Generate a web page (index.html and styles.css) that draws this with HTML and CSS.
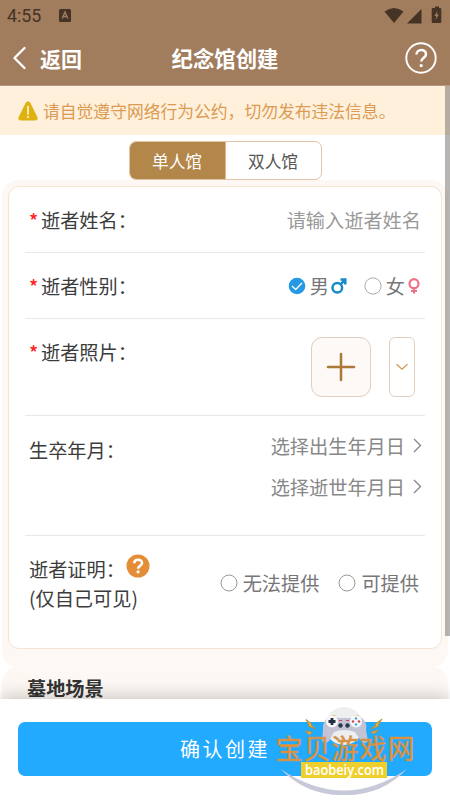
FILE: index.html
```html
<!DOCTYPE html>
<html lang="zh-CN">
<head>
<meta charset="utf-8">
<title>纪念馆创建</title>
<link rel="stylesheet" href="styles.css">
</head>
<body>
<div class="app">
  <header class="header">
    <div class="status">
      <span class="clock">4:55</span>
      <svg class="status-app" width="12" height="14" viewBox="0 0 12 14"><rect width="12" height="13" rx="1.5" fill="#453326"/><path d="M3.2 9.5 6 3l2.8 6.5M4.2 7.5h3.6" fill="none" stroke="#a17e5f" stroke-width="1.4"/></svg>
      <svg class="status-icons" width="58" height="18" viewBox="0 0 58 18"><g fill="#453326"><path d="M.5 5.500Q10 -1.500 19.500 5.500L10 17z"/><path d="M37.500 3v14.500H23z"/><path d="M49 2h2V.5h4V2h1q1.300 0 1.300 1.300v12.400q0 1.300-1.300 1.300h-7q-1.300 0-1.300-1.300V3.300Q47.700 2 49 2z"/></g><path d="M53.600 5 50.300 10h2l-.8 4 3.400-5.500h-2z" fill="#a17e5f"/></svg>
    </div>
    <nav class="navbar">
      <div class="back"><svg width="14" height="24" viewBox="0 0 14 24"><path d="M12.500 2 2.500 12 12.500 22" fill="none" stroke="#fff" stroke-width="2.300" stroke-linecap="round" stroke-linejoin="round"/></svg><span>返回</span></div>
      <h1 class="title">纪念馆创建</h1>
      <svg class="help" width="32" height="32" viewBox="0 0 32 32" fill="none" stroke="#fff"><circle cx="16" cy="16" r="14.700" stroke-width="1.900"/><path d="M11.500 12.500c0-6 9.500-6 9.500-.3 0 3.500-4.700 3.500-4.700 7.300" stroke-width="2.500"/><circle cx="16.200" cy="23.600" r="1" stroke-width="1.400"/></svg>
    </nav>
  </header>
  <main class="content">
    <div class="notice"><svg width="20" height="20" viewBox="0 0 20 20"><path d="M7.700 1.800Q10-1.200 12.300 1.800L19.300 16q1.300 3.400-2.300 3.600H3Q-.6 19.400.7 16z" fill="#dfb10e"/><path d="M10 5.500v7.500" stroke="#fff2d5" stroke-width="1.700" stroke-linecap="round"/><circle cx="10" cy="16" r="1.100" fill="#fff2d5"/></svg><span>请自觉遵守网络行为公约，切勿发布违法信息。</span></div>
    <div class="tabs"><div class="tab active">单人馆</div><div class="tab">双人馆</div></div>
    <section class="panel">
      <div class="card">
        <div class="row">
          <div class="label"><i class="req">*</i>逝者姓名：</div>
          <div class="placeholder">请输入逝者姓名</div>
        </div>
        <div class="row">
          <div class="label"><i class="req">*</i>逝者性别：</div>
          <div class="genders">
            <svg width="18" height="18" viewBox="0 0 18 18"><circle cx="9" cy="9" r="8.300" fill="#2699e3"/><path d="m4 9 3.600 3.500L14 6" fill="none" stroke="#fff" stroke-width="1.300"/></svg>
            <span class="male">男</span>
            <svg width="16" height="16" viewBox="0 0 16 16" fill="none" stroke="#168bc9" stroke-width="2.500"><circle cx="6.300" cy="9.700" r="4.800"/><path d="M9.800 6.200 14 2M9.500 1.600H14.300V6.400"/></svg>
            <svg class="radio-f" width="18" height="18" viewBox="0 0 18 18"><circle cx="9" cy="9" r="8.100" fill="#fff" stroke="#aaa"/></svg>
            <span class="female">女</span>
            <svg width="12" height="16" viewBox="0 0 12 16" fill="none" stroke="#ef7189" stroke-width="2.200"><circle cx="6" cy="5.700" r="4.500"/><path d="M6 10v5.500M3 13h6"/></svg>
          </div>
        </div>
        <div class="row photo">
          <div class="label"><i class="req">*</i>逝者照片：</div>
          <div class="uploads">
            <div class="add"><svg width="30" height="30" viewBox="0 0 30 30"><path d="M15 2v26M2 15h26" stroke="#aa7a36" stroke-width="2.500" stroke-linecap="round"/></svg></div>
            <div class="more"><svg width="14" height="8" viewBox="0 0 14 8"><path d="m1.500 1.200 5.500 5 5.500-5" fill="none" stroke="#cf9b57" stroke-width="1.300"/></svg></div>
          </div>
        </div>
        <div class="row dates">
          <div class="label">生卒年月：</div>
          <div class="pickers">
            <div class="picker">选择出生年月日<svg width="9" height="15" viewBox="0 0 9 15"><path d="m1 1 6.500 6.500L1 14" fill="none" stroke="#888" stroke-width="1.400"/></svg></div>
            <div class="picker">选择逝世年月日<svg width="9" height="15" viewBox="0 0 9 15"><path d="m1 1 6.500 6.500L1 14" fill="none" stroke="#888" stroke-width="1.400"/></svg></div>
          </div>
        </div>
        <div class="row proof">
          <div class="label two-line"><div class="proof-title">逝者证明：<svg width="24" height="24" viewBox="0 0 24 24"><circle cx="12" cy="12" r="11.500" fill="#e58d36"/><path d="M8.200 9.300c0-4.600 7.800-4.600 7.800-.4 0 2.900-3.900 3-3.900 5.800" fill="none" stroke="#fff" stroke-width="2.600"/><circle cx="12.100" cy="17.800" r="1.600" fill="#fff"/></svg></div><div>(仅自己可见)</div></div>
          <div class="options">
            <svg width="18" height="18" viewBox="0 0 18 18"><circle cx="9" cy="9" r="8" fill="#fff" stroke="#999"/></svg><span>无法提供</span>
            <svg class="second" width="18" height="18" viewBox="0 0 18 18"><circle cx="9" cy="9" r="8" fill="#fff" stroke="#999"/></svg><span>可提供</span>
          </div>
        </div>
      </div>
    </section>
    <section class="scene"><h2>墓地场景</h2></section>
    <div class="scrollbar"></div>
  </main>
  <footer class="footer">
    <button class="submit">确认创建</button>
    <svg class="watermark" width="160" height="105" viewBox="0 0 160 105">
      <circle cx="79" cy="31" r="19" fill="#eeeff0"/>
      <path d="M41 24.500 47 29l-1 1 5 4-8-3 1-1zM117 24l-7 5 1 1-5 4 8-3-1-1zM40 36l7 1-2 3zM114 35l-8 2 3 2z" fill="#e5b43a" stroke="#b58b38" stroke-width=".9"/>
      <path d="M65 22.500q1-3 5-2.500v1.500zM88 22.500q1-3 6-2v2z" fill="#efb52f"/>
      <path d="M64 22q5-2 9 1h13q5-3 9-1 8 4 6 13l2 11q-3 4-7 0l-6-9q-11-4-21 0l-5 9q-4 4-7 0l1-11q-1-9 6-13z" fill="#c3c3d4"/>
      <circle cx="67" cy="26.500" r="6" fill="#f8f8fc"/><circle cx="91" cy="26.500" r="6" fill="#f8f8fc"/>
      <path d="M67 23v7M63.500 26.500h7" stroke="#20313f" stroke-width="2.800"/>
      <circle cx="91" cy="23.500" r="1.300" fill="#45acd2"/><circle cx="88" cy="26.500" r="1.300" fill="#d1475c"/><circle cx="94" cy="26.500" r="1.300" fill="#d1475c"/><circle cx="91" cy="29.500" r="1.300" fill="#45acd2"/>
      <path d="M74 25.500h3M81 25.500h3" stroke="#d1475c" stroke-width="1.200"/>
      <circle cx="75.500" cy="30.500" r="2.200" fill="#25394d"/><circle cx="82.500" cy="30.500" r="2.200" fill="#25394d"/>
      <path d="M15.500 74Q79 117 142 74 116 101 79 100 42 101 15.500 74z" fill="#c7c9d9"/>
      <text class="brand" x="10.500" y="63.500" textLength="139">宝贝游戏网</text>
      <rect x="36" y="67" width="86" height="16" fill="#efcf2c"/>
      <text class="domain" x="40" y="79.500" textLength="79" lengthAdjust="spacingAndGlyphs">baobeiy.com</text>
    </svg>
  </footer>
</div>
</body>
</html>
```
FILE: styles.css
```css
* { box-sizing: border-box; }
body { margin: 0; background: #fff; font-family: "Noto Sans CJK SC", sans-serif; }
svg { display: block; flex: none; }
.app { width: 450px; height: 800px; overflow: hidden; display: flex; flex-direction: column; position: relative; }
.header { flex: none; height: 86px; background: #a17c5d; border-bottom: 1px solid #b7967e; }
.status { display: flex; height: 31px; padding: 6px 8px 0 7px; align-items: flex-start; }
.clock { width: 36px; margin-right: 16px; font: 17.8px/20px Roboto, sans-serif; color: #453326; }
.status-app { margin-top: 3px; }
.status-icons { margin-left: auto; }
.navbar { display: grid; grid-template-columns: 1fr auto 1fr; align-items: center; height: 54px; padding: 0 13px 0 12px; color: #fff; }
.back { display: flex; align-items: center; gap: 14px; font-size: 21px; font-weight: 700; line-height: 30px; }
.title { margin: 0; padding-left: 1px; font-size: 21.4px; font-weight: 700; line-height: 30px; }
.help { justify-self: end; }
.content { flex: 1; min-height: 0; overflow: hidden; position: relative; }
.notice { height: 49px; display: flex; align-items: center; gap: 5px; padding-left: 18px; background: #fff0dc; color: #dc9b51; font-size: 16.8px; line-height: 24px; white-space: nowrap; }
.tabs { width: 193px; height: 39px; margin: 6px 0 0 128.5px; display: flex; border: 1px solid #e5c3a6; border-radius: 7px; overflow: hidden; }
.tab { flex: 1; text-align: center; font-size: 16.7px; line-height: 38px; color: #555; }
.tab.active { background: #b38649; color: #fff; border-right: 1px solid #e3b98d; }
.panel { margin: 0 2px; padding: 6px 6px 18px; background: #fdf8f4; border-radius: 16px; }
.card { height: 463px; padding: 0 16px; background: #fff; border: 1.5px solid #f5e4d0; border-radius: 11px; }
.row { height: 66px; display: flex; justify-content: space-between; align-items: center; padding: 0 4px; border-bottom: 1.5px solid #e8e8e8; color: #3c3c3c; font-size: 19.2px; line-height: 28px; }
.label { white-space: nowrap; }
.req { display: inline-block; width: 12px; color: #f22; font-style: normal; font-weight: 500; font-size: 19px; }
.placeholder { color: #999; }
.genders { display: flex; align-items: center; color: #777; padding-right: 1px; }
.male { margin: 0 2px 0 4px; }
.radio-f { margin-left: 17px; }
.female { margin: 0 3px 0 4px; }
.photo { height: 97px; align-items: flex-start; padding-top: 19px; }
.uploads { display: flex; gap: 18px; padding-right: 6px; margin-top: -1px; }
.add, .more { height: 60px; border: 1.5px solid #e0cfc0; display: grid; place-items: center; }
.add { width: 60px; border-radius: 11px; background: #fdf9f6; }
.more { width: 26px; border-radius: 6px; }
.dates { height: 120px; align-items: flex-start; padding-top: 18px; }
.dates .label { padding-top: 2px; }
.pickers { margin: -9px -1px 0 0; }
.picker { height: 41px; display: flex; align-items: center; gap: 8px; color: #888; }
.proof { height: 112px; border: 0; align-items: flex-start; padding-top: 17px; }
.two-line { line-height: 29px; padding-top: 2px; }
.proof-title { display: flex; }
.proof-title svg { margin: -1px 0 0 1px; }
.options { display: flex; align-items: center; color: #777; padding: 16px 2px 0 0; }
.options span { margin-left: 5px; }
.second { margin-left: 19px; }
.scene { height: 80px; margin: 0 2px; padding: 5px 25px; background: #fdf8f4; border-radius: 16px; }
.scene h2 { margin: 0; font-size: 19.2px; line-height: 32px; color: #333; }
.scrollbar { position: absolute; right: 0; top: 0; width: 5px; height: 550px; background: rgba(80, 78, 74, .42); }
.footer { position: relative; flex: none; height: 101px; padding: 23px 18px; background: #fff; box-shadow: 0 -3px 17px rgba(0,0,0,.2); }
.submit { width: 100%; height: 54px; padding: 0; border: 0; border-radius: 7px; background: #22aaff; color: #fff; font: 20px/54px "Noto Sans CJK SC", sans-serif; letter-spacing: 2.5px; }
.watermark { position: absolute; left: 265px; top: -4px; }
.brand { font: 27px "Noto Sans CJK SC", sans-serif; fill: #e8912b; stroke: #bf9768; stroke-width: .6px; }
.domain { font: 600 14.5px "Open Sans", sans-serif; fill: #fff; }
```
